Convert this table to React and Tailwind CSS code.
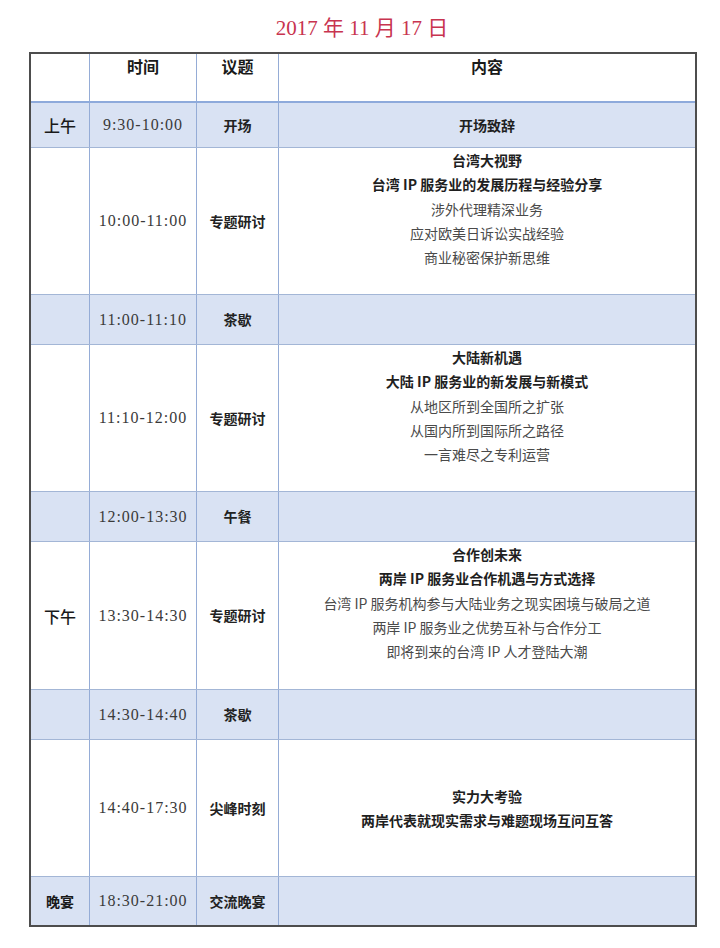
import React from "react";

const cjk = { fontFamily: '"Noto Sans CJK SC", "Noto Sans", sans-serif' };
const serif = { fontFamily: '"Liberation Serif", "Noto Sans CJK SC", serif' };

const rows = [
  { h: "h-[45px]", shade: true, side: "上午", sideCls: "text-[16px] font-medium", time: "9:30-10:00", topic: "开场", topicBold: true, center: true, lines: [["开场致辞", true]] },
  { h: "h-[147px]", time: "10:00-11:00", topic: "专题研讨", topicBold: true, lines: [["台湾大视野", true], ["台湾 IP 服务业的发展历程与经验分享", true], ["涉外代理精深业务", false], ["应对欧美日诉讼实战经验", false], ["商业秘密保护新思维", false]] },
  { h: "h-[50px]", shade: true, time: "11:00-11:10", topic: "茶歇", topicBold: true, lines: [] },
  { h: "h-[147px]", time: "11:10-12:00", topic: "专题研讨", topicBold: true, lines: [["大陆新机遇", true], ["大陆 IP 服务业的新发展与新模式", true], ["从地区所到全国所之扩张", false], ["从国内所到国际所之路径", false], ["一言难尽之专利运营", false]] },
  { h: "h-[50px]", shade: true, time: "12:00-13:30", topic: "午餐", topicBold: true, lines: [] },
  { h: "h-[148px]", side: "下午", sideCls: "text-[16px] font-medium", time: "13:30-14:30", topic: "专题研讨", topicBold: true, lines: [["合作创未来", true], ["两岸 IP 服务业合作机遇与方式选择", true], ["台湾 IP 服务机构参与大陆业务之现实困境与破局之道", false], ["两岸 IP 服务业之优势互补与合作分工", false], ["即将到来的台湾 IP 人才登陆大潮", false]] },
  { h: "h-[50px]", shade: true, time: "14:30-14:40", topic: "茶歇", topicBold: true, lines: [] },
  { h: "h-[137px]", time: "14:40-17:30", topic: "尖峰时刻", topicBold: true, center: true, lines: [["实力大考验", true], ["两岸代表就现实需求与难题现场互问互答", true]] },
  { h: "h-[48px]", shade: true, last: true, side: "晚宴", sideCls: "text-[14px] font-bold", time: "18:30-21:00", topic: "交流晚宴", topicBold: true, lines: [] },
];

export default function App() {
  return (
    <div className="w-[720px] h-[948px] bg-white pt-[14px]" style={cjk}>
      <div
        className="h-[28px] leading-[28px] text-center text-[21px] text-[#c8344f] mb-[10px] pl-[4px]"
        style={serif}
      >
        2017 年 11 月 17 日
      </div>
      <div className="ml-[29px] w-[668px] border-2 border-[#4d4d4d] flex flex-col">
        <div className="flex h-[49px] border-b-2 border-[#8eaadb] text-[16px] font-semibold text-[#1a1a1a]">
          <div className="w-[59px] border-r border-[#95acd6]"></div>
          <div className="w-[107px] border-r border-[#95acd6] text-center leading-[24px]">时间</div>
          <div className="w-[82px] border-r border-[#95acd6] text-center leading-[24px]">议题</div>
          <div className="w-[416px] text-center leading-[24px]">内容</div>
        </div>
        {rows.map((r, i) => (
          <div
            key={i}
            className={`flex ${r.h} ${r.last ? "" : "border-b border-[#a3b6d6]"} ${r.shade ? "bg-[#d9e2f3]" : "bg-white"}`}
          >
            <div className={`w-[59px] border-r border-[#95acd6] flex items-center justify-center text-[#1a1a1a] ${r.sideCls || ""}`}>
              {r.side || ""}
            </div>
            <div
              className="w-[107px] border-r border-[#95acd6] flex items-center justify-center text-[16px] tracking-[1px] text-[#3a3a3a]"
              style={serif}
            >
              {r.time}
            </div>
            <div className={`w-[82px] border-r border-[#95acd6] flex items-center justify-center text-[14px] text-[#222] ${r.topicBold ? "font-bold" : "font-medium"}`}>
              {r.topic}
            </div>
            <div className={`w-[416px] flex flex-col items-center ${r.center ? "justify-center" : "justify-start"}`}>
              {r.lines.map(([t, b], j) => (
                <div
                  key={j}
                  className={`text-[14px] leading-[24.3px] whitespace-nowrap ${b ? "font-bold text-[#1f1f1f]" : "font-normal text-[#4a4a4a]"}`}
                >
                  {t}
                </div>
              ))}
            </div>
          </div>
        ))}
      </div>
    </div>
  );
}
